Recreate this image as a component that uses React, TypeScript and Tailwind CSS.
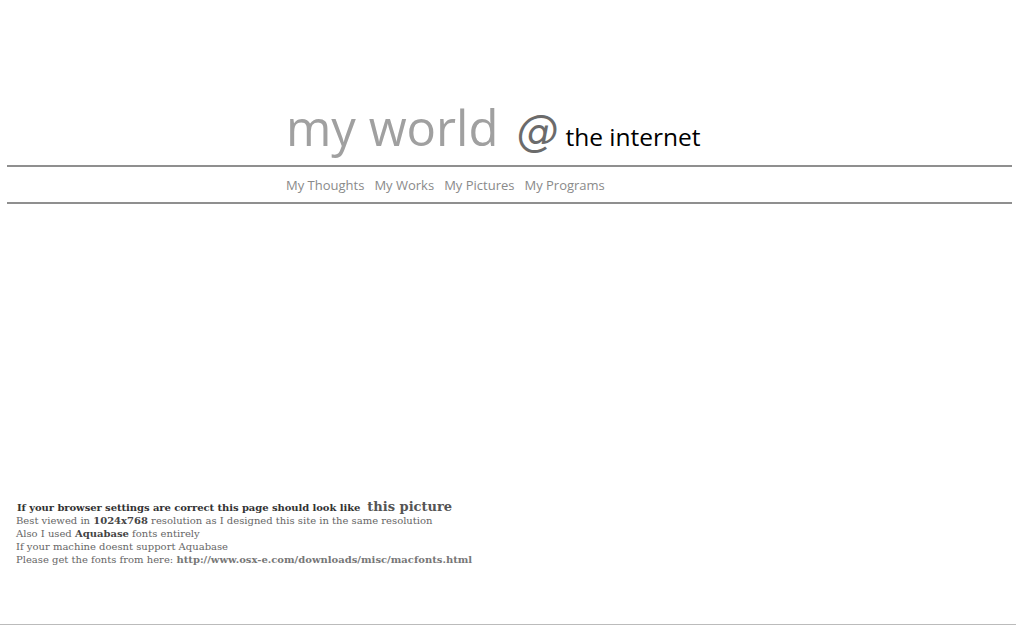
const navItems = ["My Thoughts", "My Works", "My Pictures", "My Programs"];

export default function App() {
  return (
    <div className="flex h-[625px] flex-col bg-white font-['Open_Sans',sans-serif]">
      {/* header */}
      <div className="flex items-baseline pl-[286px] pt-[103px] leading-[48px]">
        <span className="text-[49px] text-[#a0a0a0]">my world</span>
        <span className="ml-[18px] font-['DejaVu_Sans',sans-serif] text-[42px] italic text-[#6b6b6b]">@</span>
        <span className="ml-[7px] text-[24.5px] text-black">the internet</span>
      </div>

      <div className="ml-[7px] mr-[4px] mt-[4px] h-[2px] bg-[#8f8f8f]" />
      <nav className="flex gap-[10px] pl-[286px] pt-[9px] text-[13px] leading-[18px] text-[#8a8a8a]">
        {navItems.map((n) => (
          <span key={n}>{n}</span>
        ))}
      </nav>
      <div className="ml-[7px] mr-[4px] mt-[8px] h-[2px] bg-[#8f8f8f]" />

      {/* footer note */}
      <div className="mt-auto pl-[16px] pb-[58px] font-['DejaVu_Serif',serif] text-[10px] leading-[13px] text-[#666]">
        <div className="flex items-baseline pl-[1px]">
          <b className="tracking-[-0.07px] text-[#333]">If your browser settings are correct this page should look like</b>
          <b className="ml-[7px] text-[13px] text-[#555]">this picture</b>
        </div>
        <div>
          Best viewed in <b className="text-[#444]">1024x768</b> resolution as I designed this site in the same resolution
        </div>
        <div>
          Also I used <b className="text-[#444]">Aquabase</b> fonts entirely
        </div>
        <div>If your machine doesnt support Aquabase</div>
        <div>
          Please get the fonts from here: <b className="text-[#777]">http://www.osx-e.com/downloads/misc/macfonts.html</b>
        </div>
      </div>
      <div className="h-[1px] bg-[#bbb]" />
    </div>
  );
}
